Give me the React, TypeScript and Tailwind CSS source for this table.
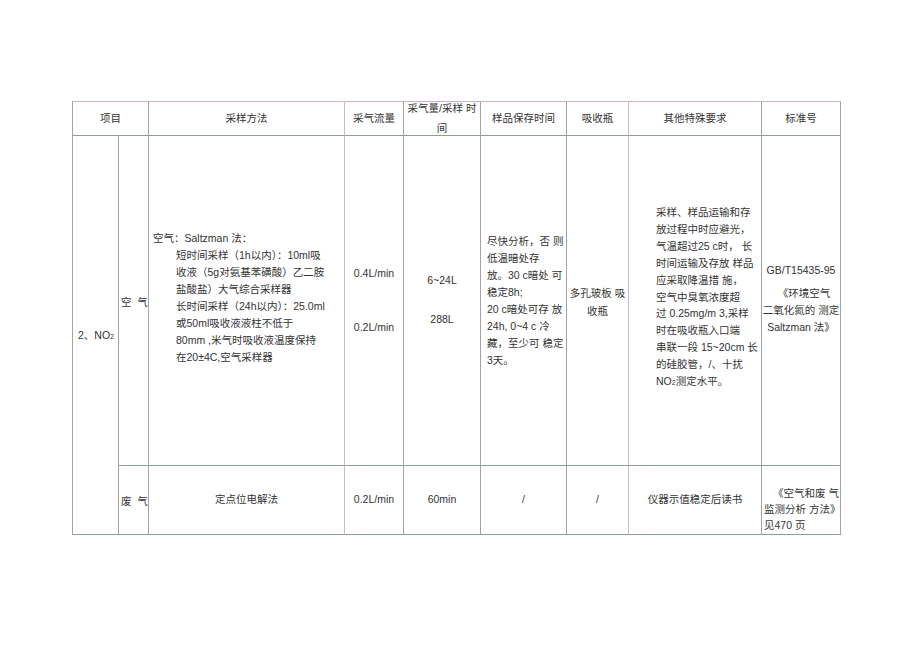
import React from 'react';

const font = { fontFamily: '"Liberation Sans", "Noto Sans CJK SC", sans-serif' };

// vertical rule colours: most are plain grey, two of them print pinkish
const vGrey = 'border-r-[#a3a3a3]';
const vPink = 'border-r-[#d2b4d2]';
const hLine = 'border-b-[#8d9f8d]';

const Cell: React.FC<{ className?: string; pink?: boolean; children?: React.ReactNode }> = ({ className = '', pink, children }) => (
  <div className={`border-r border-b ${pink ? vPink : vGrey} ${hLine} flex flex-col justify-center ${className}`}>
    {children}
  </div>
);

const Lines: React.FC<{ lines: string[]; className?: string }> = ({ lines, className = '' }) => (
  <div className={className}>
    {lines.map((l, i) => (
      <div key={i} className="whitespace-nowrap">{l}</div>
    ))}
  </div>
);

export default function App() {
  return (
    <div className="w-[920px] h-[650px] bg-white text-[#333333] text-[10.5px]" style={font}>
      <div className="pt-[101px] pl-[72px]">
        <div className="grid grid-cols-[46px_30px_196px_59px_77px_86px_62px_133px_79px] grid-rows-[34px_330px_69px] w-[769px] border-t border-l border-t-[#c9b3c9] border-l-[#a3a3a3]">
          {/* header */}
          <Cell className="col-span-2 items-center">项目</Cell>
          <Cell pink className="items-center">采样方法</Cell>
          <Cell className="items-center">采气流量</Cell>
          <Cell className="items-center leading-[20px] pb-[1px]">
            <div className="whitespace-nowrap">采气量/采样 时</div>
            <div>间</div>
          </Cell>
          <Cell className="items-center">样品保存时间</Cell>
          <Cell pink className="items-center">吸收瓶</Cell>
          <Cell className="items-center">其他特殊要求</Cell>
          <Cell className="items-center">标准号</Cell>

          {/* pollutant, spans both sample rows */}
          <Cell className="row-span-2 pl-[5px] pt-[1px]">
            <div className="whitespace-nowrap">
              2、NO<span className="text-[7px]">2</span>
            </div>
          </Cell>

          {/* air */}
          <Cell className="pl-[2px] pt-[4px]">
            <div className="whitespace-nowrap">空&nbsp;&nbsp;气</div>
          </Cell>
          <Cell pink className="pl-[4px] pb-[6px] leading-[17px]">
            <div className="whitespace-nowrap">空气：Saltzman 法：</div>
            <Lines
              className="pl-[23px]"
              lines={[
                '短时间采样（1h以内）：10ml吸',
                '收液（5g对氨基苯磺酸）乙二胺',
                '盐酸盐）大气综合采样器',
                '长时间采样（24h以内）：25.0ml',
                '或50ml吸收液液柱不低于',
                '80mm ,米气时吸收液温度保持',
                '在20±4C,空气采样器',
              ]}
            />
          </Cell>
          <Cell className="items-center pt-[1px] gap-[38px]">
            <div>0.4L/min</div>
            <div>0.2L/min</div>
          </Cell>
          <Cell className="items-center gap-[23px]">
            <div>6~24L</div>
            <div>288L</div>
          </Cell>
          <Cell className="pl-[6px] leading-[17px]">
            <Lines
              lines={[
                '尽快分析，否 则',
                '低温暗处存',
                '放。30 c暗处 可',
                '稳定8h;',
                '20 c暗处可存 放',
                '24h, 0~4 c 冷',
                '藏，至少可 稳定',
                '3天。',
              ]}
            />
          </Cell>
          <Cell pink className="items-center leading-[18px] pt-[2px]">
            <div className="whitespace-nowrap">多孔玻板 吸</div>
            <div>收瓶</div>
          </Cell>
          <Cell className="pl-[27px] pb-[5px] leading-[16.9px]">
            <Lines
              lines={[
                '采样、样品运输和存',
                '放过程中时应避光，',
                '气温超过25 c时， 长',
                '时间运输及存放 样品',
                '应采取降温措 施，',
                '空气中臭氧浓度超',
                '过 0.25mg/m 3,采样',
                '时在吸收瓶入口端',
                '串联一段 15~20cm 长',
                '的硅胶管，/、十扰',
              ]}
            />
            <div className="whitespace-nowrap">
              NO<span className="text-[7px]">2</span>测定水平。
            </div>
          </Cell>
          <Cell className="items-center pb-[3px] leading-[17px]">
            <div className="mb-[6px]">GB/T15435-95</div>
            <div className="whitespace-nowrap pl-[6px]">《环境空气</div>
            <div className="whitespace-nowrap">二氧化氮的 测定</div>
            <div className="whitespace-nowrap">Saltzman 法》</div>
          </Cell>

          {/* waste gas */}
          <Cell className="pl-[2px] pt-[4px]">
            <div className="whitespace-nowrap">废&nbsp;&nbsp;气</div>
          </Cell>
          <Cell pink className="items-center">定点位电解法</Cell>
          <Cell className="items-center">0.2L/min</Cell>
          <Cell className="items-center">60min</Cell>
          <Cell className="items-center">/</Cell>
          <Cell pink className="items-center">/</Cell>
          <Cell className="items-center">仪器示值稳定后读书</Cell>
          <Cell className="pl-[2px] pt-[18px] leading-[16px]">
            <div className="whitespace-nowrap text-right pr-[1px]">《空气和废 气</div>
            <div className="whitespace-nowrap">监测分析 方法》</div>
            <div className="whitespace-nowrap">见470 页</div>
          </Cell>
        </div>
      </div>
    </div>
  );
}
